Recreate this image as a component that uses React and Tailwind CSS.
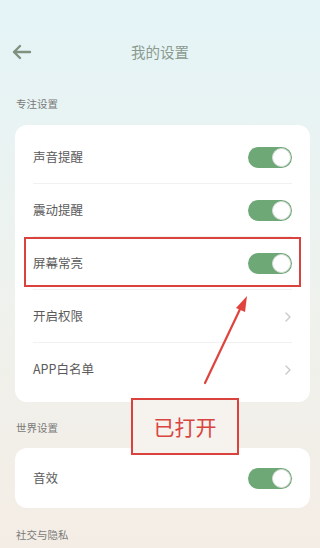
import React from "react";

const font = { fontFamily: '"Noto Sans CJK SC", "Noto Sans", sans-serif' };

const Toggle = () => (
  <div className="flex items-center justify-end w-[44px] h-[21px] rounded-full bg-[#6fa877] p-[1px]">
    <div className="w-[19px] h-[19px] rounded-full bg-white border border-[#d8ded8]" />
  </div>
);

const Chevron = () => (
  <svg width="8" height="12" viewBox="0 0 8 12" fill="none">
    <path d="M2 2l4 4-4 4" stroke="#c9c9c9" strokeWidth="1.4" strokeLinecap="round" strokeLinejoin="round" />
  </svg>
);

const Row = ({ label, right, last }) => (
  <div className="flex items-center justify-between h-[53px] mx-[18px] relative">
    <span className="text-[12.5px] text-[#5a5a5a]">{label}</span>
    {right === "toggle" ? <Toggle /> : <Chevron />}
    {!last && <div className="absolute left-0 right-0 bottom-0 h-px bg-[#f1f1f1]" />}
  </div>
);

const SectionLabel = ({ children, className }) => (
  <div className={`text-[10.5px] text-[#7a7a7a] pl-[16px] ${className}`}>{children}</div>
);

export default function App() {
  return (
    <div
      style={font}
      className="relative w-[320px] h-[548px] overflow-hidden bg-gradient-to-b from-[#e4f4f7] via-[#eef2ee] to-[#f4ede5]"
    >
      {/* header */}
      <div className="relative flex items-center justify-center h-[24px] mt-[40px]">
        <svg className="absolute left-[11px]" width="21" height="16" viewBox="0 0 21 16" fill="none">
          <path d="M19 8H3M9 2L3 8l6 6" stroke="#80917f" strokeWidth="2.4" strokeLinecap="round" strokeLinejoin="round" />
        </svg>
        <span className="text-[14.5px] text-[#8b9a8e]">我的设置</span>
      </div>

      <SectionLabel className="mt-[32px] leading-[16px]">专注设置</SectionLabel>

      <div className="ml-[15px] mr-[10px] mt-[13px] bg-white rounded-[12px] py-[6px]">
        <Row label="声音提醒" right="toggle" />
        <Row label="震动提醒" right="toggle" />
        <Row label="屏幕常亮" right="toggle" />
        <Row label="开启权限" right="chevron" />
        <Row label="APP白名单" right="chevron" last />
      </div>

      <SectionLabel className="mt-[18px] leading-[16px]">世界设置</SectionLabel>

      <div className="ml-[15px] mr-[10px] mt-[12px] bg-white rounded-[12px] h-[60px] flex items-center">
        <div className="flex-1">
          <Row label="音效" right="toggle" last />
        </div>
      </div>

      <SectionLabel className="mt-[19px] leading-[16px]">社交与隐私</SectionLabel>

      {/* annotations */}
      <div className="absolute left-[24px] top-[237px] w-[277px] h-[50px] border-2 border-[#d9423d]" />
      <svg className="absolute left-0 top-0" width="320" height="548" viewBox="0 0 320 548">
        <path d="M205 383L242 305" stroke="#e0433d" strokeWidth="2.2" strokeLinecap="round" />
        <path d="M247 296L236 308L245 312Z" fill="#e0433d" />
      </svg>
      <div className="absolute left-[131px] top-[398px] w-[108px] h-[57px] border-2 border-[#d9423d] bg-[#f6f2ee] flex items-center justify-center">
        <span className="text-[21px] text-[#d8453f]">已打开</span>
      </div>
    </div>
  );
}
